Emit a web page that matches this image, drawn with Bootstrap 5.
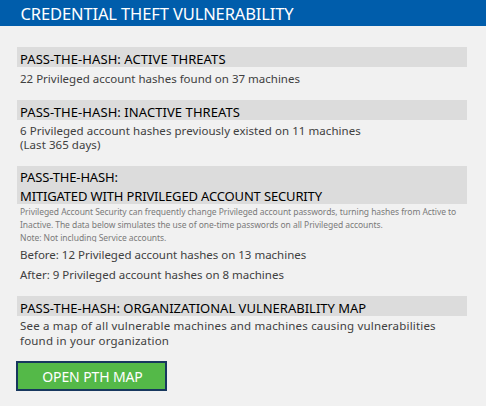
<!DOCTYPE html>
<html lang="en">
<head>
<meta charset="utf-8">
<meta name="viewport" content="width=device-width, initial-scale=1">
<title>Credential Theft Vulnerability</title>
<link rel="stylesheet" href="https://cdn.jsdelivr.net/npm/bootstrap@5.3.0/dist/css/bootstrap.min.css">
<style>
body{background:#f1f1f1;font-family:"Noto Sans",sans-serif;font-size:11.5px;line-height:15px;color:#404040;overflow:hidden}
.title-bar{height:26px;background:#005dab;padding-left:20.5px}
.title-bar h1{font-size:16.5px;line-height:27px;letter-spacing:-.12px}
.report{padding:21px 19px 0 17px}
.section-title{height:20px;background:#dcdcdc;color:#000;font-size:13px;line-height:19px;padding:3px 0 0 3px}
.section-title.two-line{height:38px;padding-top:2px}
.copy{padding:4px 0 0 3px}
.s-active{height:53px}
.s-inactive{height:66px}
.s-inactive .copy{line-height:14px}
.s-mitigated{height:130px}
.s-mitigated .copy{padding-top:5px;letter-spacing:-.01px}
.s-map{height:65px}
.s-map .copy{padding-top:2px}
.note-text{font-size:8.5px;line-height:13px;color:#7a7a7a;padding:1px 0 0 3px;height:38px;overflow:hidden;letter-spacing:-.06px}
.ls-a{letter-spacing:.07px}
.ls-b{letter-spacing:-.15px}
.ls-c{letter-spacing:0}
.ls-d{letter-spacing:.05px}
.ls-e{letter-spacing:.19px}
.map-btn{width:151px;height:30px;margin-left:-1px;border:2px solid #17375e;background:#54b948;color:#fff;font-size:14px;line-height:27px;letter-spacing:-.12px;padding:0 0 0 2px}
.map-btn:hover{background:#49a83e;border-color:#17375e;color:#fff}
</style>
</head>
<body>
<header class="title-bar text-white text-nowrap"><h1 class="m-0 fw-normal">CREDENTIAL THEFT VULNERABILITY</h1></header>
<main class="report text-nowrap">
  <section class="s-active">
    <h2 class="section-title m-0 fw-normal ls-a">PASS-THE-HASH: ACTIVE THREATS</h2>
    <p class="copy m-0">22 Privileged account hashes found on 37 machines</p>
  </section>
  <section class="s-inactive">
    <h2 class="section-title m-0 fw-normal ls-a">PASS-THE-HASH: INACTIVE THREATS</h2>
    <p class="copy m-0 ls-d">6 Privileged account hashes previously existed on 11 machines<br>(Last 365 days)</p>
  </section>
  <section class="s-mitigated">
    <h2 class="section-title two-line m-0 fw-normal ls-b">PASS-THE-HASH:<br>MITIGATED WITH PRIVILEGED ACCOUNT SECURITY</h2>
    <p class="note-text m-0">Privileged Account Security can frequently change Privileged account passwords, turning hashes from Active to<br>Inactive. The data below simulates the use of one-time passwords on all Privileged accounts.<br>Note: Not including Service accounts.</p>
    <p class="copy m-0">Before: 12 Privileged account hashes on 13 machines</p>
    <p class="copy m-0">After: 9 Privileged account hashes on 8 machines</p>
  </section>
  <section class="s-map">
    <h2 class="section-title m-0 fw-normal ls-c">PASS-THE-HASH: ORGANIZATIONAL VULNERABILITY MAP</h2>
    <p class="copy m-0 ls-e">See a map of all vulnerable machines and machines causing vulnerabilities<br>found in your organization</p>
  </section>
  <button type="button" class="btn rounded-0 map-btn d-block">OPEN PTH MAP</button>
</main>
<script src="https://cdn.jsdelivr.net/npm/bootstrap@5.3.0/dist/js/bootstrap.bundle.min.js"></script>
</body>
</html>
